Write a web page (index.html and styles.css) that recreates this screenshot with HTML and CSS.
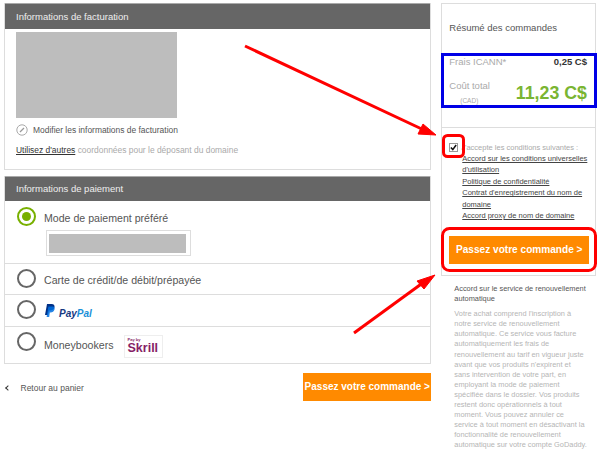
FILE: index.html
```html
<!DOCTYPE html>
<html lang="fr">
<head>
    <meta charset="UTF-8">
    <meta name="viewport" content="width=device-width, initial-scale=1.0">
    <title>Paiement</title>
    <link rel="stylesheet" href="styles.css">
</head>
<body>

<div class="page">
    <div class="main">
        <div class="panel billing">
            <h2 class="panel-title">Informations de facturation</h2>
            <div class="billing-body">
                <div class="blur-address"></div>
                <p class="edit-row">
                    <svg class="edit-icon" width="12" height="12" viewBox="0 0 12 12">
                        <circle cx="6" cy="6" r="5.2" fill="none" stroke="#aaa" stroke-width="1"/>
                        <path d="M4 8 L8 4" stroke="#999" stroke-width="1.2"/>
                    </svg>
                    Modifier les informations de facturation
                </p>
                <p class="other-row"><a href="#">Utilisez d'autres</a> coordonnées pour le déposant du domaine</p>
            </div>
        </div>

        <div class="panel payment">
            <h2 class="panel-title">Informations de paiement</h2>
            <div class="pay-row preferred">
                <span class="radio checked"></span>
                <div>
                    <div class="pay-label">Mode de paiement préféré</div>
                    <div class="saved-card"><div class="blur-card"></div></div>
                </div>
            </div>
            <div class="pay-row card-row">
                <span class="radio"></span>
                <div class="pay-label">Carte de crédit/de débit/prépayée</div>
            </div>
            <div class="pay-row paypal-row">
                <span class="radio"></span>
                <svg class="pp-mark" width="10" height="13" viewBox="0 0 10 13">
                    <path d="M2 0 H6.5 C9 0 10 1.6 9.4 3.6 C8.8 5.8 7 6.6 5 6.6 H3.8 L3 11 H0 Z" fill="#003087"/>
                    <path d="M3.4 2.4 H7.6 C9.6 2.6 10 4 9.5 5.6 C9 7.6 7.4 8.4 5.6 8.4 H4.8 L4.2 13 H1.6 Z" fill="#0070e0" opacity=".85"/>
                </svg>
                <span class="pp-word"><b>Pay</b><i>Pal</i></span>
            </div>
            <div class="pay-row book-row">
                <span class="radio"></span>
                <div class="pay-label">Moneybookers</div>
                <div class="skrill"><small>Pay by</small><strong>Skrill</strong></div>
            </div>
        </div>

        <div class="foot">
            <a class="back" href="#"><span class="chev"></span>Retour au panier</a>
            <a class="btn btn-small" href="#">Passez votre commande &gt;</a>
        </div>
    </div>

    <div class="side">
        <div class="summary">
            <h3 class="summary-title">Résumé des commandes</h3>
            <div class="fee-row">
                <span>Frais ICANN*</span>
                <b>0,25 C$</b>
            </div>
            <div class="total-row">
                <div class="total-label">Coût total<small>(CAD)</small></div>
                <div class="total-price">11,23 C$</div>
            </div>
            <div class="terms">
                <div class="accept">
                    <span class="check">
                        <svg width="7" height="7" viewBox="0 0 8 8"><path d="M1 4 L3.2 6.4 L7 1.2" fill="none" stroke="#111" stroke-width="1.8"/></svg>
                    </span>
                    <span>J'accepte les conditions suivantes :</span>
                </div>
                <ul class="term-links">
                    <li><a href="#">Accord sur les conditions universelles d'utilisation</a></li>
                    <li><a href="#">Politique de confidentialité</a></li>
                    <li><a href="#">Contrat d'enregistrement du nom de domaine</a></li>
                    <li><a href="#">Accord proxy de nom de domaine</a></li>
                </ul>
                <a class="btn btn-big" href="#">Passez votre commande &gt;</a>
            </div>
        </div>
        <div class="renew">
            <h4>Accord sur le service de renouvellement<br>automatique</h4>
            <p>Votre achat comprend l'inscription à<br>notre service de renouvellement<br>automatique. Ce service vous facture<br>automatiquement les frais de<br>renouvellement au tarif en vigueur juste<br>avant que vos produits n'expirent et<br>sans intervention de votre part, en<br>employant la mode de paiement<br>spécifiée dans le dossier. Vos produits<br>restent donc opérationnels à tout<br>moment. Vous pouvez annuler ce<br>service à tout moment en désactivant la<br>fonctionnalité de renouvellement<br>automatique sur votre compte GoDaddy.</p>
        </div>
    </div>
</div>

<!-- annotations drawn over the screenshot -->
<svg class="marks" width="600" height="459" viewBox="0 0 600 459">
    <rect x="442.5" y="54.5" width="153" height="52" fill="none" stroke="#0000e6" stroke-width="3"/>
    <rect x="443.5" y="135.5" width="20" height="21" rx="4" fill="none" stroke="#f00" stroke-width="3"/>
    <rect x="442.5" y="228.5" width="153" height="42" rx="7" fill="none" stroke="#f00" stroke-width="3"/>
    <path d="M245 46 L426 131" stroke="#f00" stroke-width="3"/>
    <path d="M436 135 L418 134 L423 124 Z" fill="#f00" stroke="#f00"/>
    <path d="M354 333 L424 282" stroke="#f00" stroke-width="3"/>
    <path d="M435 275 L424 289 L417 281 Z" fill="#f00" stroke="#f00"/>
</svg>

</body>
</html>
```

FILE: styles.css
```css
body {
    font-family: "Liberation Sans", Arial, sans-serif;
    margin: 0;
    background: #fff;
    color: #555;
    width: 600px;
    height: 459px;
    overflow: hidden;
    position: relative;
}
a {
    color: inherit;
}
.page {
    display: flex;
    gap: 10px;
    padding: 3px 4px 0;
}
.main {
    width: 428px;
}
.side {
    width: 155px;
}
.panel {
    border: 1px solid #ddd;
    border-top: 0;
}
.panel-title {
    margin: 0;
    background: #666;
    border-top: 1px solid #aaa;
    color: #eee;
    font-size: 9.5px;
    font-weight: normal;
    height: 25px;
    line-height: 25px;
    padding-left: 11px;
}
.payment .panel-title {
    height: 24px;
    line-height: 24px;
}
.billing-body {
    height: 140px;
    padding: 3px 0 0 11px;
    box-sizing: border-box;
}
.blur-address {
    width: 161px;
    height: 86px;
    background: #bdbdbd;
}
.edit-row {
    display: flex;
    align-items: center;
    gap: 5px;
    margin: 6px 0 0;
    font-size: 8.45px;
    color: #555;
}
.other-row {
    margin: 9px 0 0;
    font-size: 8.45px;
    color: #aaa;
}
.other-row a {
    color: #333;
}
.payment {
    margin-top: 6px;
}
.pay-row {
    display: flex;
    align-items: flex-start;
    border-top: 1px solid #ddd;
    padding: 5px 0 0 12px;
    box-sizing: border-box;
}
.payment .panel-title + .pay-row {
    border-top: 0;
    padding-top: 6px;
}
.preferred {
    height: 62px;
}
.card-row {
    height: 31px;
}
.paypal-row {
    height: 32px;
}
.book-row {
    height: 37px;
}
.radio {
    flex: none;
    width: 15px;
    height: 15px;
    border: 2px solid #666;
    border-radius: 50%;
    margin-right: 8px;
    background: #fff;
}
.radio.checked {
    border-color: #78b000;
    position: relative;
}
.radio.checked::after {
    content: "";
    position: absolute;
    left: 3px;
    top: 3px;
    width: 9px;
    height: 9px;
    border-radius: 50%;
    background: #78b000;
}
.pay-label {
    font-size: 10.6px;
    color: #555;
    line-height: 20px;
    margin-top: 1px;
}
.book-row .pay-label {
    margin-top: 3px;
}
.saved-card {
    margin: 2px 0 0 2px;
    width: 145px;
    height: 26px;
    border: 1px solid #ddd;
    box-sizing: border-box;
    padding: 3px 4px 0 2px;
}
.blur-card {
    height: 19px;
    background: #bdbdbd;
}
.pp-mark {
    margin: 4px 4px 0 1px;
}
.pp-word {
    font-size: 10px;
    font-weight: bold;
    font-style: italic;
    line-height: 22px;
    margin-top: 3px;
}
.pp-word b {
    color: #17387f;
}
.pp-word i {
    color: #1b90d8;
}
.skrill {
    width: 39px;
    height: 23px;
    margin: 3px 0 0 10px;
    border: 1px solid #eee;
    box-sizing: border-box;
    color: #862165;
    padding: 2px 0 0 3px;
    line-height: 1;
}
.skrill small {
    display: block;
    font-size: 4px;
    font-weight: bold;
}
.skrill strong {
    display: block;
    font-size: 12.5px;
}
.foot {
    display: flex;
    justify-content: space-between;
    align-items: center;
    margin-top: 9px;
}
.back {
    display: flex;
    align-items: center;
    font-size: 8.5px;
    text-decoration: none;
    color: #555;
    margin-top: 2px;
}
.chev {
    width: 3px;
    height: 3px;
    border-left: 1.5px solid #333;
    border-bottom: 1.5px solid #333;
    transform: rotate(45deg);
    margin: 0 11px 0 1.5px;
}
.btn {
    display: block;
    background: #ff8a00;
    color: #fff;
    font-weight: bold;
    text-align: center;
    text-decoration: none;
}
.btn-small {
    width: 128px;
    height: 28px;
    line-height: 28px;
    font-size: 10px;
}
.btn-big {
    width: 140px;
    height: 28px;
    line-height: 28px;
    font-size: 10.1px;
    margin: 15px 0 0 7px;
}
.summary {
    border: 1px solid #ddd;
    height: 273px;
    box-sizing: border-box;
}
.summary-title {
    margin: 0;
    padding: 18px 0 0 7px;
    height: 50px;
    box-sizing: border-box;
    font-size: 9.5px;
    font-weight: normal;
    color: #555;
}
.fee-row {
    display: flex;
    justify-content: space-between;
    padding: 0 8px 0 7px;
    font-size: 9.5px;
    line-height: 16px;
    color: #aaa;
}
.fee-row b {
    color: #333;
    font-size: 9.5px;
}
.total-row {
    display: flex;
    justify-content: space-between;
    padding: 10px 8px 0 7px;
    height: 57px;
    box-sizing: border-box;
}
.total-label {
    font-size: 9.5px;
    color: #aaa;
}
.total-label small {
    display: block;
    font-size: 6.5px;
    margin: 6px 0 0 11px;
}
.total-price {
    font-size: 17.8px;
    font-weight: bold;
    color: #7ab532;
    margin-top: 3px;
}
.terms {
    border-top: 1px solid #ddd;
    padding-top: 13px;
}
.accept {
    display: flex;
    align-items: center;
    font-size: 7.5px;
    color: #aaa;
    padding-left: 7px;
    height: 12px;
}
.check {
    flex: none;
    display: flex;
    align-items: center;
    justify-content: center;
    width: 9px;
    height: 9px;
    border: 1px solid #999;
    box-sizing: border-box;
    margin-right: 3px;
    background: #fff;
}
.term-links {
    list-style: none;
    margin: 0;
    padding: 0 0 0 20px;
    font-size: 7.5px;
    line-height: 11.4px;
    color: #444;
}
.renew {
    padding: 8px 0 0 13px;
    font-size: 7.4px;
    line-height: 10.1px;
    white-space: nowrap;
}
.renew h4 {
    margin: 0 0 5px;
    font-size: 7.4px;
    font-weight: normal;
    color: #555;
}
.renew p {
    margin: 0;
    color: #b5b5b5;
}
.marks {
    position: absolute;
    left: 0;
    top: 0;
    pointer-events: none;
}
```
